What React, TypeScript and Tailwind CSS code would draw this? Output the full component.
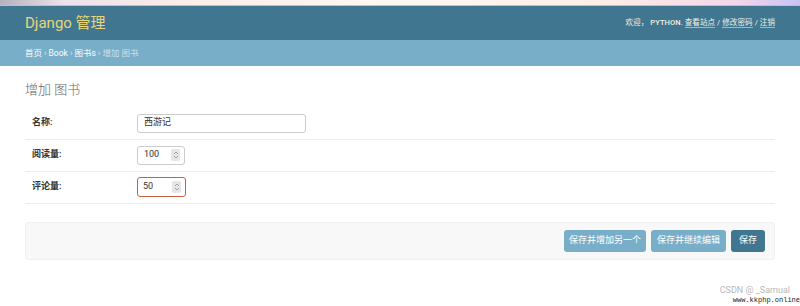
import React from "react";

const font = { fontFamily: 'Roboto, "Noto Sans CJK SC", sans-serif' };

function Spinner() {
  return (
    <span className="flex h-[12px] w-[9px] flex-col items-center justify-center rounded-[2px] bg-[#e6e6e8]">
      <svg width="6" height="10" viewBox="0 0 6 10" fill="none" stroke="#9a9a9a" strokeWidth="0.9">
        <path d="M1 4 L3 2 L5 4" />
        <path d="M1 6 L3 8 L5 6" />
      </svg>
    </span>
  );
}

function Row({ label, children }: { label: string; children: React.ReactNode }) {
  return (
    <div className="flex h-[32px] items-center border-b border-[#eeeeee]">
      <div className="w-[112px] pl-[7px] text-[9px] font-semibold text-[#333]">{label}</div>
      {children}
    </div>
  );
}

export default function App() {
  return (
    <div className="relative h-[306px] w-[800px] overflow-hidden bg-white" style={font}>
      <div className="h-[6px] bg-[linear-gradient(to_right,#b4b2bd_0%,#ece2ec_8%,#fbefe8_25%,#fff8f2_50%,#fcefe6_75%,#f3d6ea_92%,#c6c4f4_100%)] border-b border-[#c9bdb5]" />
      <div className="flex h-[34px] items-center justify-between bg-[#417690] pl-[25px] pr-[25px]">
        <div className="text-[15px] text-[#e7d77a]">Django 管理</div>
        <div className="text-[7.5px] tracking-[0.1px] text-[#f2f2e6]">
          欢迎， <span className="font-medium">PYTHON</span>.{" "}
          <span className="border-b border-[#9fb9c8]">查看站点</span> /{" "}
          <span className="border-b border-[#9fb9c8]">修改密码</span> /{" "}
          <span className="border-b border-[#9fb9c8]">注销</span>
        </div>
      </div>
      <div className="flex h-[26px] items-center bg-[#79aec8] pl-[25px] text-[8.5px] text-white">
        <span>首页</span>
        <span className="px-[2px] text-[#d6e8f0]">›</span>
        <span>Book</span>
        <span className="px-[2px] text-[#d6e8f0]">›</span>
        <span>图书s</span>
        <span className="px-[2px] text-[#d6e8f0]">›</span>
        <span className="text-[#c9e0ec]">增加 图书</span>
      </div>
      <div className="px-[25px]">
        <div className="pt-[14px] text-[13px] font-light text-[#666]">增加 图书</div>
        <div className="mt-[8px]">
          <Row label="名称:">
            <div className="flex h-[19px] w-[169px] items-center rounded-[3px] border border-[#cccccc] pl-[6px] text-[9px] text-[#333]">
              西游记
            </div>
          </Row>
          <Row label="阅读量:">
            <div className="flex h-[19px] w-[48px] items-center justify-between rounded-[3px] border border-[#cccccc] pl-[6px] pr-[4px] text-[9px] text-[#333]">
              100
              <Spinner />
            </div>
          </Row>
          <Row label="评论量:">
            <div className="flex h-[20px] w-[49px] items-center justify-between rounded-[3px] border-[1.5px] border-[#c8623e] pl-[5px] pr-[4px] text-[9px] text-[#333]">
              50
              <Spinner />
            </div>
          </Row>
        </div>
        <div className="mt-[18px] flex h-[38px] items-center justify-end gap-[5px] rounded-[3px] border border-[#f0f0f0] bg-[#f8f8f8] pr-[9px]">
          <div className="flex h-[22px] w-[82px] items-center justify-center rounded-[3px] bg-[#79aec8] text-[9px] text-white">
            保存并增加另一个
          </div>
          <div className="flex h-[22px] w-[75px] items-center justify-center rounded-[3px] bg-[#79aec8] text-[9px] text-white">
            保存并继续编辑
          </div>
          <div className="flex h-[22px] w-[34px] items-center justify-center rounded-[3px] bg-[#417690] text-[9px] text-white">
            保存
          </div>
        </div>
      </div>
      <div className="absolute bottom-[9px] right-[10px] text-[9px] text-[#b8b8b8]">CSDN @ _Samual</div>
      <div
        className="absolute bottom-[1px] right-0 text-[7px] text-[#222]"
        style={{ fontFamily: '"Liberation Mono", monospace' }}
      >
        www.kkphp.online
      </div>
    </div>
  );
}
